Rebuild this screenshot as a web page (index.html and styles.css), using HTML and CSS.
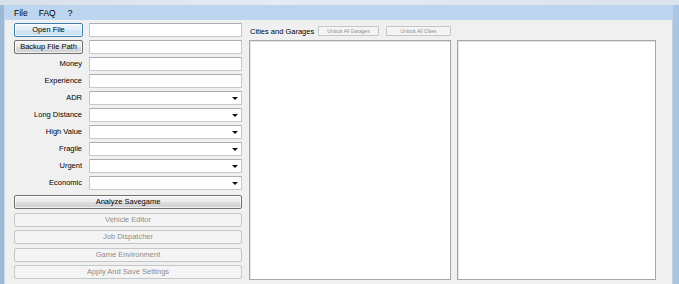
FILE: index.html
```html
<!DOCTYPE html>
<html lang="en">
<head>
    <meta charset="UTF-8">
    <title>Savegame Editor</title>
    <link rel="stylesheet" href="styles.css">
</head>
<body>

<div class="window">
    <div class="titlebar"></div>
    <div class="frame">
        <nav class="menubar">
            <span>File</span>
            <span>FAQ</span>
            <span>?</span>
        </nav>

        <section class="content">
            <div class="left">
                <div class="form-grid">
                    <button class="btn default">Open File</button>
                    <input class="textbox" type="text">
                    <button class="btn">Backup File Path</button>
                    <input class="textbox" type="text">

                    <label>Money</label>
                    <input class="textbox" type="text">
                    <label>Experience</label>
                    <input class="textbox" type="text">

                    <label>ADR</label>
                    <div class="combo"><span class="arrow"></span></div>
                    <label>Long Distance</label>
                    <div class="combo"><span class="arrow"></span></div>
                    <label>High Value</label>
                    <div class="combo"><span class="arrow"></span></div>
                    <label>Fragile</label>
                    <div class="combo"><span class="arrow"></span></div>
                    <label>Urgent</label>
                    <div class="combo"><span class="arrow"></span></div>
                    <label>Economic</label>
                    <div class="combo"><span class="arrow"></span></div>
                </div>

                <div class="actions">
                    <button class="btn wide">Analyze Savegame</button>
                    <button class="btn wide" disabled>Vehicle Editor</button>
                    <button class="btn wide" disabled>Job Dispatcher</button>
                    <button class="btn wide" disabled>Game Environment</button>
                    <button class="btn wide" disabled>Apply And Save Settings</button>
                </div>
            </div>

            <div class="right">
                <div class="cities-head">
                    <span class="cities-label">Cities and Garages</span>
                    <button class="btn mini" disabled>Unlock All Garages</button>
                    <button class="btn mini" disabled>Unlock All Cities</button>
                </div>
                <div class="lists">
                    <div class="listbox first"></div>
                    <div class="listbox second"></div>
                </div>
            </div>
        </section>
    </div>
</div>

</body>
</html>
```

FILE: styles.css
```css
html, body {
    margin: 0;
    padding: 0;
    height: 284px;
    overflow: hidden;
}

body {
    font-family: 'Liberation Sans', 'DejaVu Sans', sans-serif;
    font-size: 7.5px;
    color: #000;
    background: #dfe8f1;
}

.window {
    display: flex;
    flex-direction: column;
    height: 284px;
}

.titlebar {
    height: 5px;
    background: linear-gradient(to right, #d6e0ea, #e4ecf3 40%, #d9e3ed);
}

.frame {
    flex: 1;
    display: flex;
    flex-direction: column;
    background: #f0f0f0;
    border-left: 4px solid #9db9d8;
    border-right: 6px solid #a9c6e6;
    box-shadow: inset 1px 0 0 #c8d8ea, inset -1px 0 0 #c9cdd2;
}

.menubar {
    display: flex;
    gap: 11px;
    height: 15px;
    align-items: center;
    padding-left: 10px;
    background: #bdd5ee;
    font-size: 8.5px;
}

.menubar span:nth-child(3) {
    margin-left: 1px;
}

.content {
    display: flex;
    gap: 7px;
    padding: 3px 0 0 10px;
}

.left {
    width: 228px;
    display: flex;
    flex-direction: column;
}

.form-grid {
    display: grid;
    grid-template-columns: 69px 153px;
    column-gap: 6px;
    row-gap: 3px;
}

.form-grid label {
    text-align: right;
    line-height: 14px;
    height: 14px;
    padding-right: 1px;
    white-space: nowrap;
}

.textbox, .combo {
    box-sizing: border-box;
    height: 14px;
    margin: 0;
    padding: 0;
    background: #fff;
    border: 1px solid #c5c8cd;
    border-top-color: #abadb3;
}

.combo {
    position: relative;
}

.combo .arrow {
    position: absolute;
    right: 3px;
    top: 5px;
    width: 0;
    height: 0;
    border-left: 3px solid transparent;
    border-right: 3px solid transparent;
    border-top: 3px solid #111;
}

.btn {
    box-sizing: border-box;
    height: 14px;
    margin: 0;
    padding: 0;
    font-family: inherit;
    font-size: 7.5px;
    line-height: 12px;
    white-space: nowrap;
    color: #000;
    border: 1px solid #707070;
    border-radius: 2px;
    background: linear-gradient(to bottom, #f4f4f4 0%, #ebebeb 48%, #dddddd 52%, #cfcfcf 100%);
    box-shadow: inset 0 0 0 1px rgba(255, 255, 255, 0.7);
}

.btn.default {
    border-color: #3c7fb1;
    background: linear-gradient(to bottom, #eef6fb 0%, #e3eef7 48%, #d4e6f3 52%, #c6def0 100%);
}

.btn:disabled {
    color: #8d8d8d;
    border-color: #c4c6c8;
    background: #f4f4f4;
    box-shadow: none;
}

.actions {
    display: flex;
    flex-direction: column;
    gap: 3.5px;
    margin-top: 5px;
}

.btn.wide {
    width: 228px;
}

.right {
    width: 407px;
    display: flex;
    flex-direction: column;
}

.cities-head {
    display: flex;
    align-items: center;
    height: 14px;
    margin-top: 1px;
}

.cities-label {
    font-size: 7.5px;
    width: 68px;
    padding-left: 1px;
    white-space: nowrap;
}

.btn.mini {
    height: 10px;
    font-size: 5px;
    line-height: 8px;
    border-radius: 1px;
}

.btn.mini:first-of-type {
    width: 61px;
}

.btn.mini:last-of-type {
    width: 65px;
    margin-left: 7px;
}

.lists {
    display: flex;
    gap: 6px;
    margin-top: 2px;
}

.listbox {
    box-sizing: border-box;
    height: 240px;
    background: #fff;
    border: 1px solid #a4a6aa;
    box-shadow: inset 1px 1px 0 #e3e3e3;
}

.listbox.first {
    width: 202px;
}

.listbox.second {
    width: 200px;
}
```
